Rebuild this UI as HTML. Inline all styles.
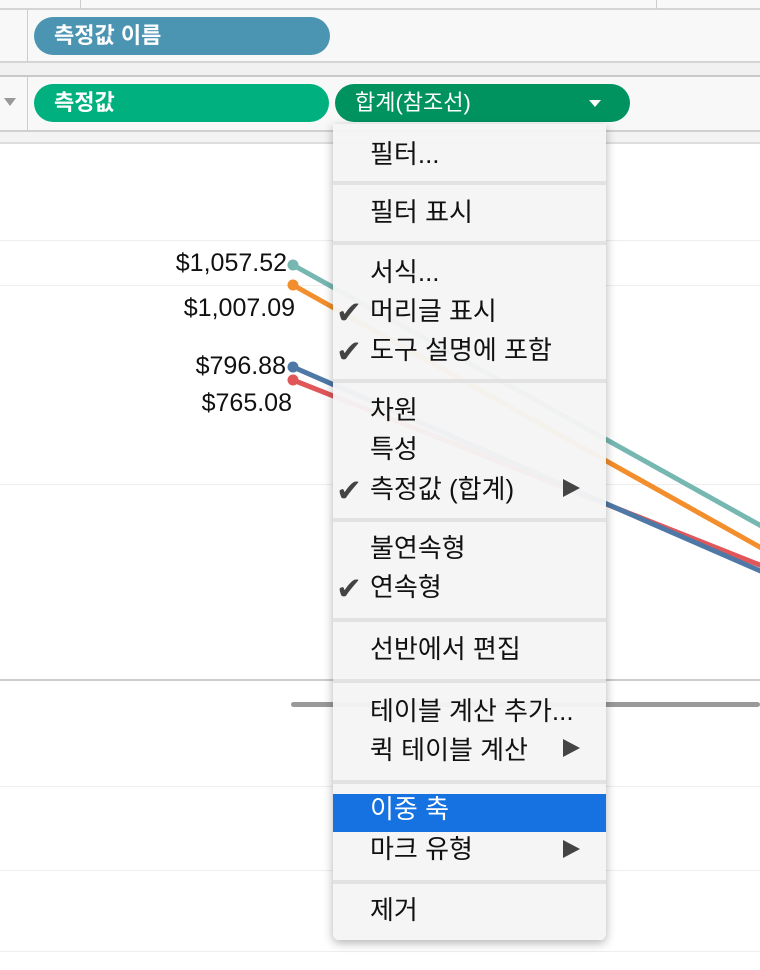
<!DOCTYPE html>
<html><head><meta charset="utf-8"><style>
body{margin:0;width:760px;height:970px;overflow:hidden;background:#fff;position:relative;font-family:"Liberation Sans","Noto Sans CJK KR",sans-serif}
.a{position:absolute}
.pill{position:absolute;border-radius:19px;color:#fff;font-size:22px;font-weight:bold;line-height:38px;padding-left:20px;box-sizing:border-box}
.menu{position:absolute;left:333px;top:124px;width:273px;height:816px;background:rgba(245,245,245,0.96);border-radius:0 0 6px 6px;box-shadow:0 3px 10px rgba(0,0,0,0.3)}
.it{position:absolute;left:37px;font-size:26px;color:#111;line-height:30px;white-space:nowrap}
.sep{position:absolute;left:0;width:273px;height:4px;background:#e2e2e2}
.ck{position:absolute;left:3px;font-size:31px;color:#444;line-height:30px;font-family:"DejaVu Sans",sans-serif}
.ar{position:absolute;left:230px;width:0;height:0;border-top:9px solid transparent;border-bottom:9px solid transparent;border-left:17px solid #444}
.lab{position:absolute;font-size:25px;color:#111;text-align:right;width:160px}
</style></head><body>
<div class="a" style="left:0;top:0;width:760px;height:143px;background:#f8f8f8"></div>
<div class="a" style="left:0;top:8px;width:760px;height:2px;background:#d4d4d4"></div>
<div class="a" style="left:80px;top:0;width:1px;height:9px;background:#ccc"></div>
<div class="a" style="left:656px;top:0;width:1px;height:9px;background:#ccc"></div>
<div class="a" style="left:27px;top:10px;width:1px;height:52px;background:#ccc"></div>
<div class="a" style="left:0;top:61px;width:760px;height:2px;background:#d4d4d4"></div>
<div class="a" style="left:0;top:63px;width:760px;height:12px;background:#f1f1f1"></div>
<div class="a" style="left:0;top:75px;width:760px;height:2px;background:#c8c8c8"></div>
<div class="a" style="left:27px;top:77px;width:1px;height:54px;background:#ccc"></div>
<div class="a" style="left:0;top:130px;width:760px;height:2px;background:#d0d0d0"></div>
<div class="a" style="left:0;top:132px;width:760px;height:10px;background:#f3f3f3"></div>
<div class="a" style="left:0;top:142px;width:760px;height:2px;background:#ddd"></div>
<div class="a" style="left:4px;top:98px;width:0;height:0;border-left:6px solid transparent;border-right:6px solid transparent;border-top:8px solid #999"></div>
<div class="pill" style="left:34px;top:17px;width:296px;background:#4b95b3">측정값 이름</div>
<div class="pill" style="left:34px;top:84px;width:295px;background:#00b17f">측정값</div>
<div class="pill" style="left:335px;top:84px;width:295px;background:#00935f;font-weight:normal">합계(참조선)</div>
<div class="a" style="left:589px;top:100px;border-left:6px solid transparent;border-right:6px solid transparent;border-top:7px solid #fff"></div>
<div class="a" style="left:0;top:240px;width:760px;height:1px;background:#eee"></div>
<div class="a" style="left:0;top:285px;width:760px;height:1px;background:#eee"></div>
<div class="a" style="left:0;top:484px;width:760px;height:1px;background:#eee"></div>
<div class="a" style="left:0;top:679px;width:760px;height:2px;background:#ccc"></div>
<div class="a" style="left:0;top:786px;width:760px;height:1px;background:#eee"></div>
<div class="a" style="left:0;top:870px;width:760px;height:1px;background:#eee"></div>
<div class="a" style="left:0;top:951px;width:760px;height:1px;background:#eee"></div>
<div class="a" style="left:291px;top:702px;width:469px;height:5px;border-radius:3px;background:#999"></div>
<svg class="a" style="left:0;top:0" width="760" height="970">
<g stroke-width="5" stroke-linecap="round">
<line x1="293" y1="265" x2="765" y2="528" stroke="#76b7b2"/>
<line x1="293" y1="285" x2="765" y2="550" stroke="#f28e2b"/>
<line x1="293" y1="380" x2="765" y2="567" stroke="#e15759"/>
<line x1="293" y1="367" x2="765" y2="573" stroke="#4e79a7"/>
</g>
<circle cx="293" cy="265" r="5.5" fill="#76b7b2"/><circle cx="293" cy="285" r="5.5" fill="#f28e2b"/>
<circle cx="293" cy="367" r="5.5" fill="#4e79a7"/><circle cx="293" cy="380" r="5.5" fill="#e15759"/>
</svg>
<div class="lab" style="left:127px;top:249px">$1,057.52</div>
<div class="lab" style="left:135px;top:294px">$1,007.09</div>
<div class="lab" style="left:126px;top:352px">$796.88</div>
<div class="lab" style="left:132px;top:389px">$765.08</div>
<div class="menu">
<div class="it" style="top:15px">필터...</div>
<div class="sep" style="top:57px"></div>
<div class="it" style="top:73px">필터 표시</div>
<div class="sep" style="top:117px"></div>
<div class="it" style="top:133px">서식...</div>
<div class="ck" style="top:174px">✔</div><div class="it" style="top:172px">머리글 표시</div>
<div class="ck" style="top:213px">✔</div><div class="it" style="top:211px">도구 설명에 포함</div>
<div class="sep" style="top:255px"></div>
<div class="it" style="top:271px">차원</div>
<div class="it" style="top:310px">특성</div>
<div class="ck" style="top:352px">✔</div><div class="it" style="top:350px">측정값 (합계)</div><div class="ar" style="top:355px"></div>
<div class="sep" style="top:394px"></div>
<div class="it" style="top:409px">불연속형</div>
<div class="ck" style="top:450px">✔</div><div class="it" style="top:448px">연속형</div>
<div class="sep" style="top:494px"></div>
<div class="it" style="top:510px">선반에서 편집</div>
<div class="sep" style="top:555px"></div>
<div class="it" style="top:572px">테이블 계산 추가...</div>
<div class="it" style="top:611px">퀵 테이블 계산</div><div class="ar" style="top:615px"></div>
<div class="sep" style="top:656px"></div>
<div class="a" style="left:0;top:670px;width:273px;height:38px;background:#1672e0"></div>
<div class="it" style="top:670px;color:#fff">이중 축</div>
<div class="it" style="top:710px">마크 유형</div><div class="ar" style="top:716px"></div>
<div class="sep" style="top:756px"></div>
<div class="it" style="top:771px">제거</div>
</div>
</body></html>
